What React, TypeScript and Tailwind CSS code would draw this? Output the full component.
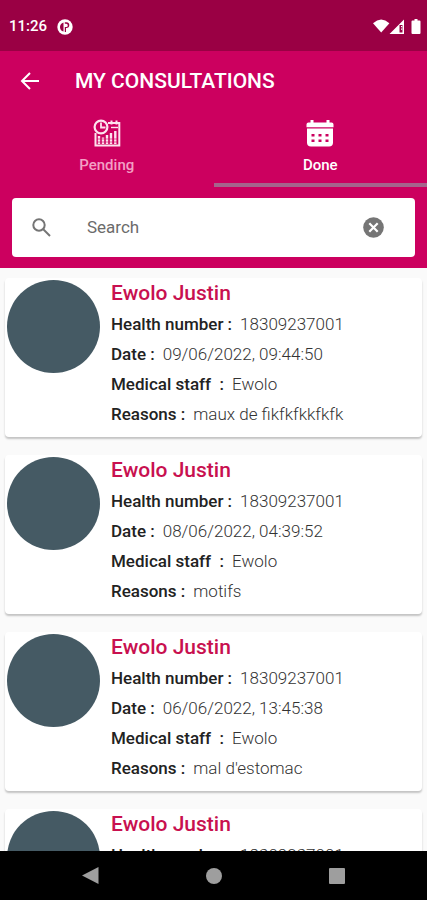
import { useState } from "react";

interface Consultation {
  id: number;
  name: string;
  healthNumber: string;
  date: string;
  staff: string;
  reasons: string;
}

const CONSULTATIONS: Consultation[] = [
  { id: 1, name: "Ewolo Justin", healthNumber: "18309237001", date: "09/06/2022, 09:44:50", staff: "Ewolo", reasons: "maux de fikfkfkkfkfk" },
  { id: 2, name: "Ewolo Justin", healthNumber: "18309237001", date: "08/06/2022, 04:39:52", staff: "Ewolo", reasons: "motifs" },
  { id: 3, name: "Ewolo Justin", healthNumber: "18309237001", date: "06/06/2022, 13:45:38", staff: "Ewolo", reasons: "mal d'estomac" },
  { id: 4, name: "Ewolo Justin", healthNumber: "18309237001", date: "06/06/2022, 10:12:07", staff: "Ewolo", reasons: "motifs" },
];

const StatusBar = () => (
  <div className="flex h-[51px] shrink-0 items-center bg-[#9a0044] pt-0.5 pr-1.5 pl-[9px] text-white">
    <span className="text-[15px] font-medium">11:26</span>
    <svg className="ml-2.5 size-4" viewBox="0 0 16 16" aria-hidden="true">
      <circle cx="8" cy="8" r="7.700" fill="#fff" />
      <path d="M6.500 3.500Q3 4.500 3 8t3.500 4.600z" fill="#9a0044" />
      <path d="M7.800 3.200h1.600a2.900 2.900 0 0 1 0 5.800h-.4V13H7.800V8h1.400a1.600 1.600 0 0 0 0-3.200H7.800z" fill="#9a0044" />
    </svg>
    <svg className="ml-auto h-[15px] w-[48px]" viewBox="0 0 48 15" fill="#fff" aria-hidden="true">
      <path d="M0 4.200Q8.200-3 16.400 4.200L8.200 13.600z" />
      <path d="M31 .5V15H16.500zM29.500 6h-3v7.500h3z" fillRule="evenodd" />
      <path d="M28 7h1.200v1.200H28zM28 9.500h1.200v1.200H28z" />
      <path d="M39.500 1.500h2V0h3v1.500h2q1 0 1 1V14q0 1-1 1h-7q-1 0-1-1V2.500q0-1 1-1z" />
    </svg>
  </div>
);

const PendingIcon = () => (
  <svg className="h-7 w-[28px]" viewBox="0 0 28 28" fill="none" stroke="#fde3ee" aria-hidden="true">
    <path d="M15 4H26.300V26.500H2.500V14" strokeWidth="2" />
    <path d="M18.500 1.500v4M23.500 1.500v4" strokeWidth="2" />
    <path d="M18 8.500h7" strokeWidth="1.400" />
    <circle cx="8" cy="8" r="6.400" strokeWidth="2.200" />
    <path d="M8 3.500v5h4.500" strokeWidth="1.800" />
    <path d="M6 17V25M10 18.500V25M14 16V25M18 14V25M22.300 12V25" strokeWidth="2.400" />
    <path d="M4 20h21M4 23h21" stroke="#cc005f" strokeWidth=".6" />
  </svg>
);

const DoneIcon = () => (
  <svg className="h-7 w-[28px]" viewBox="0 0 28 28" aria-hidden="true">
    <path d="M2.500 3.500h2V1h3v2.500h13V1h3v2.500h2q2 0 2 2V8.200H.5V5.500q0-2 2-2z" fill="#fff" />
    <path d="M1 9.500h26v14q0 4-4 4h-18q-4 0-4-4z" fill="#fff" />
    <path d="M5.500 15h3v2.600h-3zM12.500 15h3v2.600h-3zM19.500 15h3v2.600h-3zM5.500 20.400h3V23h-3zM12.500 20.400h3V23h-3zM19.500 20.400h3V23h-3z" fill="#cc005f" />
  </svg>
);

const Field = ({ label, value }: { label: string; value: string }) => (
  <div className="flex h-[30px] items-center gap-2 whitespace-pre">
    <dt className="font-medium text-[#222]">{label}</dt>
    <dd className="font-light text-[#333]">{value}</dd>
  </div>
);

const ConsultationCard = ({ item }: { item: Consultation }) => (
  <li className="flex h-[159px] shrink-0 gap-[11px] rounded bg-white pt-0.5 pl-0.5 shadow-[0_2px_2px_rgba(0,0,0,0.22)]">
    <div className="size-[93px] shrink-0 rounded-full bg-[#455a64]" />
    <div className="min-w-0 flex-1">
      <h2 className="h-[30px] text-[21px] leading-[27px] font-medium text-[#c8104f]">{item.name}</h2>
      <dl className="text-[17px]">
        <Field label="Health number :" value={item.healthNumber} />
        <Field label="Date :" value={item.date} />
        <Field label="Medical staff  :" value={item.staff} />
        <Field label="Reasons :" value={item.reasons} />
      </dl>
    </div>
  </li>
);

export default function App() {
  const [tab, setTab] = useState("done");
  const [search, setSearch] = useState("");

  return (
    <div className="flex h-screen flex-col overflow-hidden bg-[#fafafa] font-[Roboto,sans-serif]">
      <StatusBar />

      <header className="shrink-0 bg-[#cc005f] pb-[11px] text-white">
        <div className="flex h-[60px] items-center pl-5">
          <button type="button" aria-label="Back" className="mr-[35px]">
            <svg className="size-5" viewBox="0 0 20 20" fill="none" stroke="#fff" strokeWidth="2" aria-hidden="true">
              <path d="M19 10H3M10 2L2 10l8 8" />
            </svg>
          </button>
          <h1 className="pt-0.5 text-[21px] font-medium">MY CONSULTATIONS</h1>
        </div>

        <div className="grid grid-cols-2" role="tablist">
          <button
            type="button"
            role="tab"
            aria-selected={tab === "pending"}
            onClick={() => setTab("pending")}
            className={`flex h-[76px] flex-col items-center gap-1.5 border-b-4 pt-2 ${tab === "pending" ? "border-[#a5648c]" : "border-transparent"}`}
          >
            <PendingIcon />
            <span className="text-[15px] leading-6 font-medium text-[#f3a0c5]">Pending</span>
          </button>
          <button
            type="button"
            role="tab"
            aria-selected={tab === "done"}
            onClick={() => setTab("done")}
            className={`flex h-[76px] flex-col items-center gap-1.5 border-b-4 pt-2 ${tab === "done" ? "border-[#a5648c]" : "border-transparent"}`}
          >
            <DoneIcon />
            <span className="text-[15px] leading-6 font-medium">Done</span>
          </button>
        </div>

        <div className="mx-3 mt-[11px] flex h-[59px] items-center rounded bg-white pr-[31px] pl-5">
          <svg className="size-[19px] shrink-0" viewBox="0 0 19 19" fill="none" stroke="#757575" strokeWidth="2" aria-hidden="true">
            <circle cx="7" cy="7" r="5.700" />
            <path d="M11 11l7 7" />
          </svg>
          <input
            type="text"
            aria-label="Search"
            placeholder="Search"
            value={search}
            onChange={(e) => setSearch(e.target.value)}
            className="ml-9 min-w-0 flex-1 text-[17px] text-[#444] outline-none placeholder:text-[#6b6b6b]"
          />
          <button type="button" aria-label="Clear search" onClick={() => setSearch("")}>
            <svg className="size-[21px]" viewBox="0 0 21 21" aria-hidden="true">
              <circle cx="10.500" cy="10.500" r="10.300" fill="#757575" />
              <path d="M6.300 6.300l8.400 8.400M14.700 6.300l-8.400 8.400" stroke="#fff" strokeWidth="2.200" />
            </svg>
          </button>
        </div>
      </header>

      <main className="min-h-0 flex-1 overflow-y-auto [scrollbar-width:none]">
        <ul className="flex flex-col gap-[18px] px-[5px] pt-2.5">
          {CONSULTATIONS.map((item) => (
            <ConsultationCard key={item.id} item={item} />
          ))}
        </ul>
      </main>

      <nav className="flex h-[49px] shrink-0 items-center justify-center gap-[107px] bg-black">
        <button type="button" aria-label="Back">
          <svg className="size-[17px]" viewBox="0 0 17 17" fill="#9e9e9e" aria-hidden="true">
            <path d="M0 8.500L16.500 0v17z" />
          </svg>
        </button>
        <button type="button" aria-label="Home" className="size-4 rounded-full bg-[#9e9e9e]" />
        <button type="button" aria-label="Recent apps" className="size-4 rounded-[1px] bg-[#9e9e9e]" />
      </nav>
    </div>
  );
}
